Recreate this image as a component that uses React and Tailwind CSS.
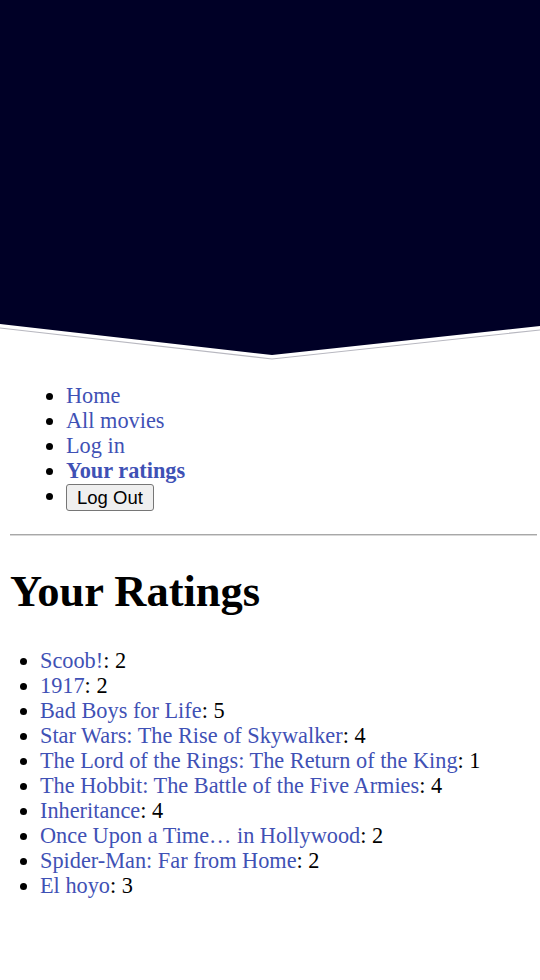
export default function App() {
  const ratings = [
    ["Scoob!", 2],
    ["1917", 2],
    ["Bad Boys for Life", 5],
    ["Star Wars: The Rise of Skywalker", 4],
    ["The Lord of the Rings: The Return of the King", 1],
    ["The Hobbit: The Battle of the Five Armies", 4],
    ["Inheritance", 4],
    ["Once Upon a Time… in Hollywood", 2],
    ["Spider-Man: Far from Home", 2],
    ["El hoyo", 3],
  ];
  return (
    <div className="w-[540px] min-h-[980px] bg-white font-['Liberation_Serif','Times_New_Roman',serif] text-[22.3px] leading-[25px] text-black">
      <svg width="540" height="361" viewBox="0 0 540 361" className="block">
        <polyline points="0,328 272,359 540,330" fill="none" stroke="#b8b8c0" strokeWidth="1.2" />
        <polygon points="0,0 540,0 540,326 272,355 0,324" fill="#000026" />
      </svg>
      <ul className="list-disc ml-[10px] pl-[56px] mt-[22px] mb-[22px]">
        <li><a className="text-[#3f51b5]">Home</a></li>
        <li><a className="text-[#3f51b5]">All movies</a></li>
        <li><a className="text-[#3f51b5]">Log in</a></li>
        <li><a className="text-[#3f51b5] font-bold">Your ratings</a></li>
        <li className="h-[29px]">
          <button className="mt-[1px] h-[27px] px-[10px] bg-[#efefef] border border-[#767676] rounded-[3px] font-['Liberation_Sans',Arial,sans-serif] text-[18.5px] leading-[20px] text-black align-top">
            Log Out
          </button>
        </li>
      </ul>
      <hr className="ml-[10px] w-[527px] h-0 border-0 border-t border-b border-t-[#a8a8a8] border-b-[#d8d8d8]" />
      <h1 className="ml-[10px] mt-[29px] mb-[31px] text-[44.5px] leading-[52px] font-bold">Your Ratings</h1>
      <ul className="list-disc pl-[40px]">
        {ratings.map(([t, r]) => (
          <li key={t}>
            <a className="text-[#3f51b5]">{t}</a>: {r}
          </li>
        ))}
      </ul>
    </div>
  );
}
